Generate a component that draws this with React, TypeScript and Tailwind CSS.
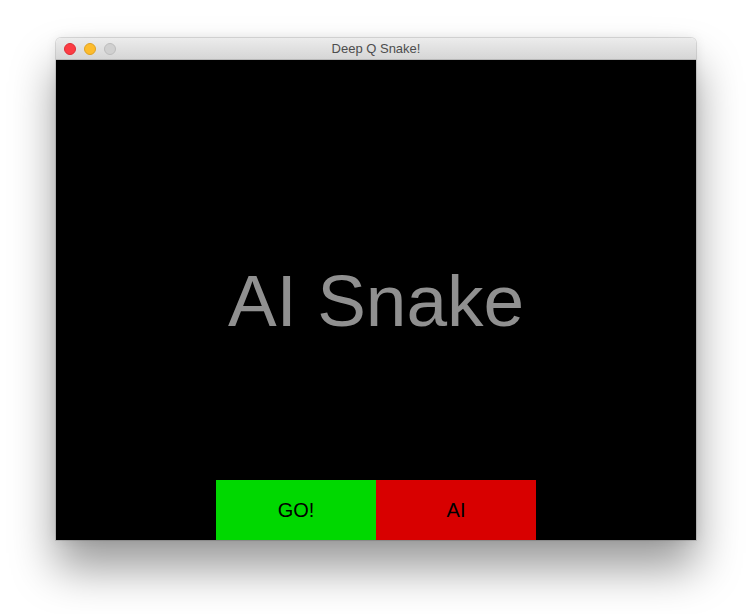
export default function App() {
  return (
    <div className="w-[752px] h-[614px] bg-white pt-[38px] pl-[56px] font-['Liberation_Sans',Arial,sans-serif]">
      <div className="w-[640px] rounded-t-[5px] overflow-hidden shadow-[0_0_0_1px_rgba(0,0,0,0.12),0_0_12px_rgba(0,0,0,0.08),0_28px_45px_0_rgba(0,0,0,0.4)]">
        {/* Title bar */}
        <div className="relative h-[22px] bg-gradient-to-b from-[#ececec] to-[#d6d6d6] flex items-center justify-center border-b border-[#b8b8b8]">
          <div className="absolute left-[8px] top-[5px] flex gap-[8px]">
            <span className="w-[12px] h-[12px] rounded-full bg-[#fc3c44] border border-[#de2d34]" />
            <span className="w-[12px] h-[12px] rounded-full bg-[#fdbc2d] border border-[#dea223]" />
            <span className="w-[12px] h-[12px] rounded-full bg-[#d0d0d0] border border-[#bcbcbc]" />
          </div>
          <span className="text-[13px] text-[#4d4d4d] leading-none">Deep Q Snake!</span>
        </div>
        {/* Game area */}
        <div className="h-[480px] bg-black flex flex-col">
          <div className="flex-1 flex items-center justify-center pt-[60px]">
            <span className="text-[73px] leading-none text-[#909090]">AI Snake</span>
          </div>
          <div className="flex justify-center">
            <button className="w-[160px] h-[60px] bg-[#00d800] text-black text-[20px]">GO!</button>
            <button className="w-[160px] h-[60px] bg-[#d80000] text-black text-[20px]">AI</button>
          </div>
        </div>
      </div>
    </div>
  );
}
